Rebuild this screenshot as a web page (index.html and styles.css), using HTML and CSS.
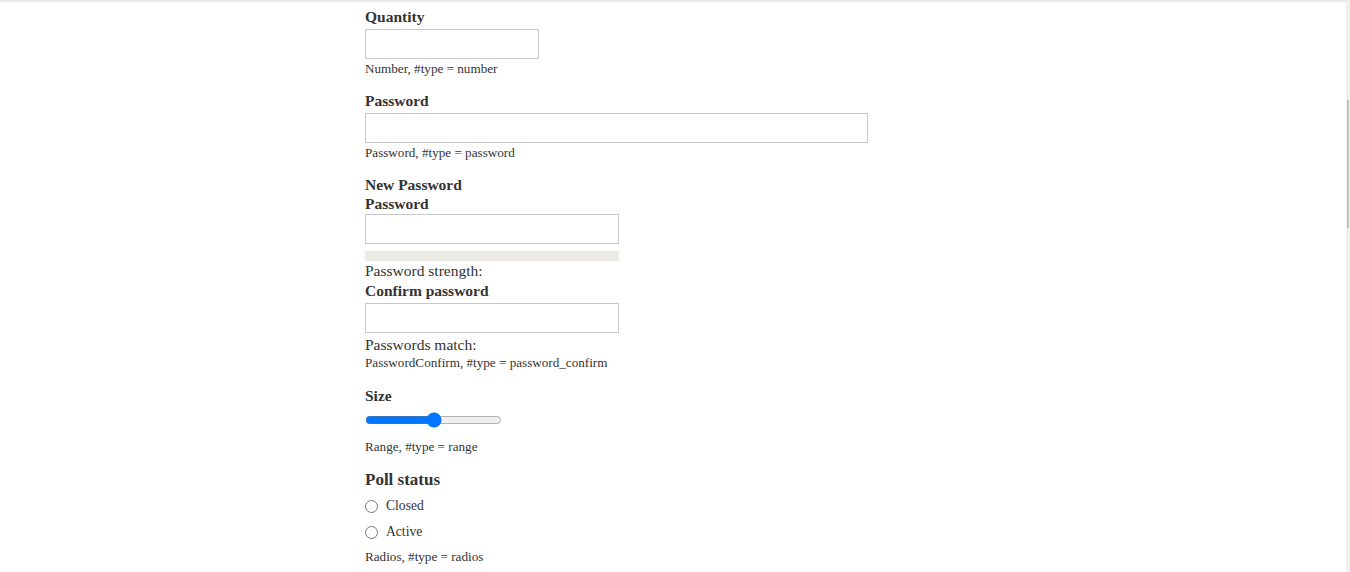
FILE: index.html
```html
<!DOCTYPE html>
<html lang="en">
<head>
<meta charset="utf-8">
<title>Form elements</title>
<link rel="stylesheet" href="styles.css">
</head>
<body>
<div class="top-shadow"></div>
<main class="content">
  <div class="form-item">
    <label class="label" for="qty">Quantity</label>
    <input class="text-input w-number" id="qty" type="number">
    <div class="description">Number, #type = number</div>
  </div>
  <div class="form-item">
    <label class="label" for="pw">Password</label>
    <input class="text-input w-wide" id="pw" type="password">
    <div class="description">Password, #type = password</div>
  </div>
  <div class="form-item">
    <div class="label">New Password</div>
    <label class="label" for="pw1">Password</label>
    <input class="text-input w-mid tight" id="pw1" type="password">
    <div class="strength-bar"></div>
    <div class="info">Password strength:</div>
    <label class="label confirm-label" for="pw2">Confirm password</label>
    <input class="text-input w-mid" id="pw2" type="password">
    <div class="info match">Passwords match:</div>
    <div class="description">PasswordConfirm, #type = password_confirm</div>
  </div>
  <div class="form-item">
    <label class="label size-label" for="size">Size</label>
    <input class="range" id="size" type="range" min="0" max="100" value="50">
    <div class="description range-desc">Range, #type = range</div>
  </div>
  <div class="form-item">
    <div class="legend">Poll status</div>
    <div class="radios">
      <label class="radio"><input type="radio" name="poll"><span>Closed</span></label>
      <label class="radio"><input type="radio" name="poll"><span>Active</span></label>
    </div>
    <div class="description radios-desc">Radios, #type = radios</div>
  </div>
</main>
<div class="scrollbar"><div class="thumb"></div></div>
</body>
</html>
```

FILE: styles.css
```css
html, body {
  margin: 0;
  padding: 0;
  background: #fff;
  overflow: hidden;
  height: 100%;
}
body {
  font-family: "Liberation Serif", "Times New Roman", serif;
  color: #333;
}
.top-shadow {
  position: fixed;
  top: 0;
  left: 0;
  right: 4px;
  height: 2px;
  background: #e8e8e8;
}
.content {
  padding: 7px 0 0 365px;
  display: flex;
  flex-direction: column;
}
.form-item {
  display: flex;
  flex-direction: column;
  align-items: flex-start;
  margin-bottom: 14px;
}
.label {
  display: block;
  font-weight: bold;
  font-size: 15.5px;
  line-height: 19px;
}
.confirm-label {
  margin-top: 1px;
}
.size-label {
  margin-top: 1px;
}
.text-input {
  box-sizing: border-box;
  height: 30px;
  margin: 3px 0 0;
  border: 1px solid #c8c8c8;
  border-radius: 0;
  padding: 0 6px;
  font: inherit;
  background: #fff;
}
.text-input.tight {
  margin-top: 1px;
}
.w-number { width: 174px; }
.w-wide { width: 503px; }
.w-mid { width: 254px; }
.description {
  font-size: 13.15px;
  line-height: 16px;
  margin-top: 2px;
}
.strength-bar {
  width: 254px;
  height: 10px;
  margin-top: 7px;
  background: #ebeae4;
}
.info {
  font-size: 15.5px;
  line-height: 19px;
}
.info.match {
  margin-top: 2px;
}
.info.match + .description {
  margin-top: 1px;
}
.range {
  width: 137px;
  margin: 7px 0 0;
  accent-color: #0075ff;
}
.range-desc {
  margin-top: 11px;
}
.legend {
  font-weight: bold;
  font-size: 17px;
  line-height: 21px;
}
.radios {
  display: flex;
  flex-direction: column;
  margin-top: 3px;
}
.radio {
  display: flex;
  align-items: center;
  gap: 8px;
  font-size: 13.6px;
  line-height: 26px;
}
.radio input {
  margin: 0;
  width: 13px;
  height: 13px;
}
.radios-desc {
  margin-top: 4px;
}
.scrollbar {
  position: fixed;
  top: 0;
  right: 0;
  width: 4px;
  height: 100%;
  background: #f1f1f1;
}
.thumb {
  margin: 100px 0 0 1px;
  width: 2px;
  height: 128px;
  background: #c1c1c1;
}
```
